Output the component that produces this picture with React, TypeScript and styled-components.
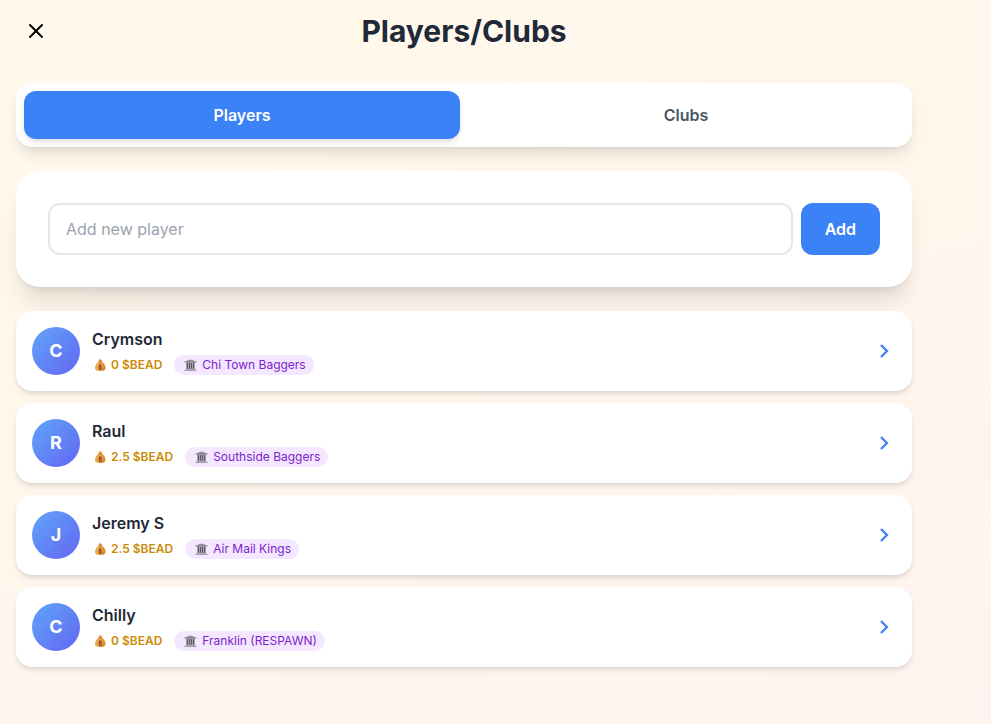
import React, { useState } from "react";
import styled, { createGlobalStyle } from "styled-components";
import { X } from "lucide-react";

const GlobalStyle = createGlobalStyle`
  *, *::before, *::after { box-sizing: border-box; }
  body { margin: 0; font-family: Inter, "Liberation Sans", sans-serif; color: #1f2937; }
  button, input { font: inherit; }
  h1, h2, ul { margin: 0; padding: 0; }
`;

const Page = styled.div`
  min-height: 100vh;
  padding: 11px 16px 32px;
  background: linear-gradient(160deg, #fff9eb 0%, #fff6ec 50%, #fff3ef 100%);
`;

const Content = styled.main`
  max-width: 896px;
`;

const Header = styled.header`
  display: grid;
  grid-template-columns: 40px 1fr 40px;
  align-items: center;
  margin-bottom: 32px;
`;

const CloseButton = styled.button`
  display: flex;
  padding: 8px;
  border: 0;
  border-radius: 9999px;
  background: transparent;
  color: #000;
  cursor: pointer;
`;

const Title = styled.h1`
  font-size: 30px;
  line-height: 36px;
  font-weight: 700;
  text-align: center;
`;

const Tabs = styled.div`
  display: flex;
  gap: 8px;
  padding: 8px;
  margin-bottom: 24px;
  border-radius: 16px;
  background: #fff;
  box-shadow: 0 10px 15px -3px rgba(0, 0, 0, 0.1), 0 4px 6px -4px rgba(0, 0, 0, 0.1);
`;

const Tab = styled.button<{ $active: boolean }>`
  flex: 1;
  padding: 12px 24px;
  border: 0;
  border-radius: 12px;
  background: ${(p) => (p.$active ? "#3b82f6" : "transparent")};
  color: ${(p) => (p.$active ? "#fff" : "#4b5563")};
  box-shadow: ${(p) =>
    p.$active ? "0 4px 6px -1px rgba(0, 0, 0, 0.1), 0 2px 4px -2px rgba(0, 0, 0, 0.1)" : "none"};
  font-size: 16px;
  line-height: 24px;
  font-weight: 600;
  cursor: pointer;
`;

const AddForm = styled.form`
  display: flex;
  gap: 8px;
  padding: 32px;
  margin-bottom: 24px;
  border-radius: 24px;
  background: #fff;
  box-shadow: 0 20px 25px -5px rgba(0, 0, 0, 0.1), 0 8px 10px -6px rgba(0, 0, 0, 0.1);
`;

const NameInput = styled.input`
  flex: 1;
  min-width: 0;
  height: 52px;
  padding: 12px 16px;
  border: 2px solid #e5e7eb;
  border-radius: 12px;
  background: #fff;
  color: #1f2937;
  font-size: 16px;
  line-height: 24px;
  &::placeholder { color: #9ca3af; opacity: 1; }
  &:focus { outline: none; border-color: #3b82f6; }
`;

const AddButton = styled.button`
  padding: 12px 24px;
  border: 0;
  border-radius: 12px;
  background: #3b82f6;
  color: #fff;
  font-size: 16px;
  line-height: 24px;
  font-weight: 600;
  cursor: pointer;
`;

const PlayerList = styled.ul`
  display: grid;
  gap: 12px;
  list-style: none;
`;

const PlayerCard = styled.button`
  display: flex;
  align-items: center;
  gap: 12px;
  width: 100%;
  padding: 16px;
  border: 0;
  border-radius: 16px;
  background: #fff;
  color: inherit;
  text-align: left;
  box-shadow: 0 4px 6px -1px rgba(0, 0, 0, 0.1), 0 2px 4px -2px rgba(0, 0, 0, 0.1);
  cursor: pointer;
`;

const Avatar = styled.span`
  display: flex;
  align-items: center;
  justify-content: center;
  width: 48px;
  height: 48px;
  border-radius: 50%;
  background: linear-gradient(to bottom right, #60a5fa, #6366f1);
  color: #fff;
  font-size: 18px;
  line-height: 28px;
  font-weight: 700;
`;

const Details = styled.span`
  display: grid;
  flex: 1;
  gap: 4px;
`;

const PlayerName = styled.span`
  font-size: 16px;
  line-height: 24px;
  font-weight: 600;
`;

const Meta = styled.span`
  display: flex;
  align-items: center;
  gap: 12px;
  font-size: 12px;
  line-height: 16px;
`;

const Balance = styled.span`
  display: flex;
  align-items: center;
  gap: 3px;
  color: #ca8a04;
  font-weight: 600;
`;

const ClubBadge = styled.span`
  display: flex;
  align-items: center;
  gap: 4px;
  padding: 2px 8px;
  border-radius: 9999px;
  background: #f3e8ff;
  color: #7e22ce;
`;

const Chevron = () => (
  <svg width="24" height="24" viewBox="0 0 24 24" aria-hidden="true">
    <path d="M9 6l6 6-6 6" fill="none" stroke="#3b82f6" strokeWidth="2.3" />
  </svg>
);

const MoneyBag = () => (
  <svg width="16" height="16" viewBox="0 0 16 16" aria-hidden="true">
    <path d="M6.700 5.300C4.200 6.500 3 8.800 3 10.800 3 13 4.500 14 8.100 14s5.300-1 5.300-3.200c0-2-1.200-4.300-3.500-5.500z" fill="#f0a444" />
    <path d="M9.900 5.300c2.300 1.200 3.500 3.500 3.500 5.500 0 2.200-1.700 3.200-5.300 3.200 3.200-1 4-4.800 1.800-8.700z" fill="#dd8630" />
    <path d="M6.900 5 6.300 2.800 7.400 3 8.300 1.600 9.200 3l1.100-.3L9.700 5z" fill="#e99b40" />
    <path d="M6.600 5.300h3.400" stroke="#b86a34" strokeWidth="0.900" strokeLinecap="round" />
    <path d="M7.400 8v4.400h1.100c1.600 0 1.600-2.200 0-2.200 1.400 0 1.400-2.200 0-2.200zM8.100 7.300v5.900" fill="none" stroke="#834b31" strokeWidth="0.900" />
  </svg>
);

const Building = () => (
  <svg width="16" height="16" viewBox="0 0 16 16" aria-hidden="true">
    <path d="M4 5h9v7H4z" fill="#aaa3b1" />
    <path d="M2.500 4.600 8.500 2.500l6 2.100v1h-12z" fill="#8f8797" />
    <path d="M5.500 6v6M7.500 6v6M9.500 6v6M11.500 6v6" stroke="#5b5463" strokeWidth="1" />
    <path d="M4 11.500h9v1H4z" fill="#8f8797" />
    <path d="M2.500 12.500h12V14h-12z" fill="#a69eac" />
  </svg>
);

const players = [
  { name: "Crymson", balance: "0", club: "Chi Town Baggers" },
  { name: "Raul", balance: "2.5", club: "Southside Baggers" },
  { name: "Jeremy S", balance: "2.5", club: "Air Mail Kings" },
  { name: "Chilly", balance: "0", club: "Franklin (RESPAWN)" },
];

export default function App() {
  const [tab, setTab] = useState("Players");
  return (
    <>
      <GlobalStyle />
      <Page>
        <Content>
          <Header>
            <CloseButton type="button" aria-label="Close">
              <X size={24} />
            </CloseButton>
            <Title>Players/Clubs</Title>
          </Header>
          <Tabs role="tablist">
            {["Players", "Clubs"].map((label) => (
              <Tab
                key={label}
                type="button"
                role="tab"
                aria-selected={tab === label}
                $active={tab === label}
                onClick={() => setTab(label)}
              >
                {label}
              </Tab>
            ))}
          </Tabs>
          <AddForm onSubmit={(e: React.FormEvent) => e.preventDefault()}>
            <NameInput type="text" aria-label="Add new player" placeholder="Add new player" />
            <AddButton type="submit">Add</AddButton>
          </AddForm>
          <PlayerList>
            {players.map((player) => (
              <li key={player.name}>
                <PlayerCard type="button">
                  <Avatar>{player.name[0]}</Avatar>
                  <Details>
                    <PlayerName>{player.name}</PlayerName>
                    <Meta>
                      <Balance>
                        <MoneyBag />
                        {player.balance} $BEAD
                      </Balance>
                      <ClubBadge>
                        <Building />
                        {player.club}
                      </ClubBadge>
                    </Meta>
                  </Details>
                  <Chevron />
                </PlayerCard>
              </li>
            ))}
          </PlayerList>
        </Content>
      </Page>
    </>
  );
}
